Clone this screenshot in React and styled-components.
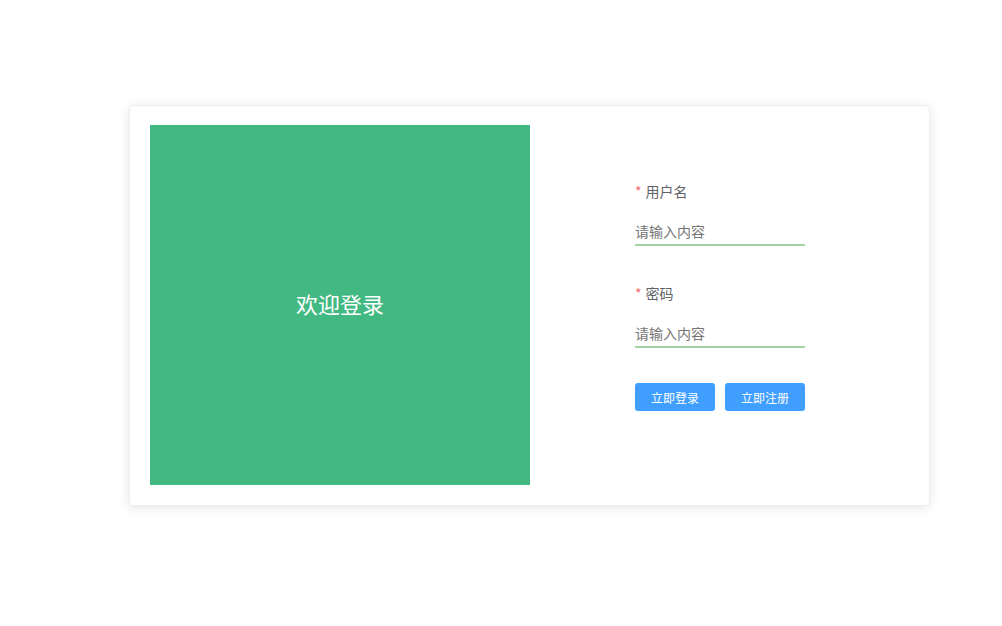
import React from "react";
import styled, { createGlobalStyle } from "styled-components";

const Global = createGlobalStyle`
  html, body { margin: 0; padding: 0; background: #fff; }
  body { font-family: "Microsoft YaHei", "Noto Sans CJK SC", "Liberation Sans", sans-serif; }
  * { box-sizing: border-box; }
`;

const Page = styled.div`
  width: 1002px;
  height: 626px;
  padding: 105px 0 0 129px;
`;

const Card = styled.div`
  width: 801px;
  height: 401px;
  background: #fff;
  border: 1px solid #ebeef5;
  border-radius: 4px;
  box-shadow: 0 2px 12px 0 rgba(0, 0, 0, 0.1);
  padding: 19px 20px;
  display: flex;
`;

const Welcome = styled.div`
  width: 380px;
  height: 360px;
  background: #42b983;
  color: #fff;
  font-size: 22px;
  display: flex;
  align-items: center;
  justify-content: center;
  padding-bottom: 4px;
`;

const FormCol = styled.div`
  padding: 56px 0 0 105px;
  display: flex;
  flex-direction: column;
  width: 275px;
`;

const Item = styled.div`
  display: flex;
  flex-direction: column;
  margin-bottom: ${(p) => p.$gap}px;
`;

const Label = styled.label`
  font-size: 14px;
  line-height: 20px;
  color: #606266;
  margin-bottom: 17px;
  &::before {
    content: "*";
    color: #f56c6c;
    margin-right: 4px;
  }
`;

const Input = styled.input`
  width: 170px;
  height: 28px;
  border: none;
  border-bottom: 2px solid #a3d2a3;
  outline: none;
  padding: 0;
  font-family: inherit;
  font-size: 14px;
  color: #606266;
  background: transparent;
  &::placeholder { color: #757575; }
`;

const Buttons = styled.div`
  display: flex;
  gap: 10px;
`;

const Button = styled.button`
  width: 80px;
  height: 28px;
  border: none;
  border-radius: 3px;
  background: #409eff;
  color: #fff;
  font-family: inherit;
  font-size: 12px;
  cursor: pointer;
  padding: 0;
`;

export default function App() {
  return (
    <>
      <Global />
      <Page>
        <Card>
          <Welcome>欢迎登录</Welcome>
          <FormCol>
            <Item $gap={37}>
              <Label>用户名</Label>
              <Input placeholder="请输入内容" />
            </Item>
            <Item $gap={35}>
              <Label>密码</Label>
              <Input type="password" placeholder="请输入内容" />
            </Item>
            <Buttons>
              <Button>立即登录</Button>
              <Button>立即注册</Button>
            </Buttons>
          </FormCol>
        </Card>
      </Page>
    </>
  );
}
